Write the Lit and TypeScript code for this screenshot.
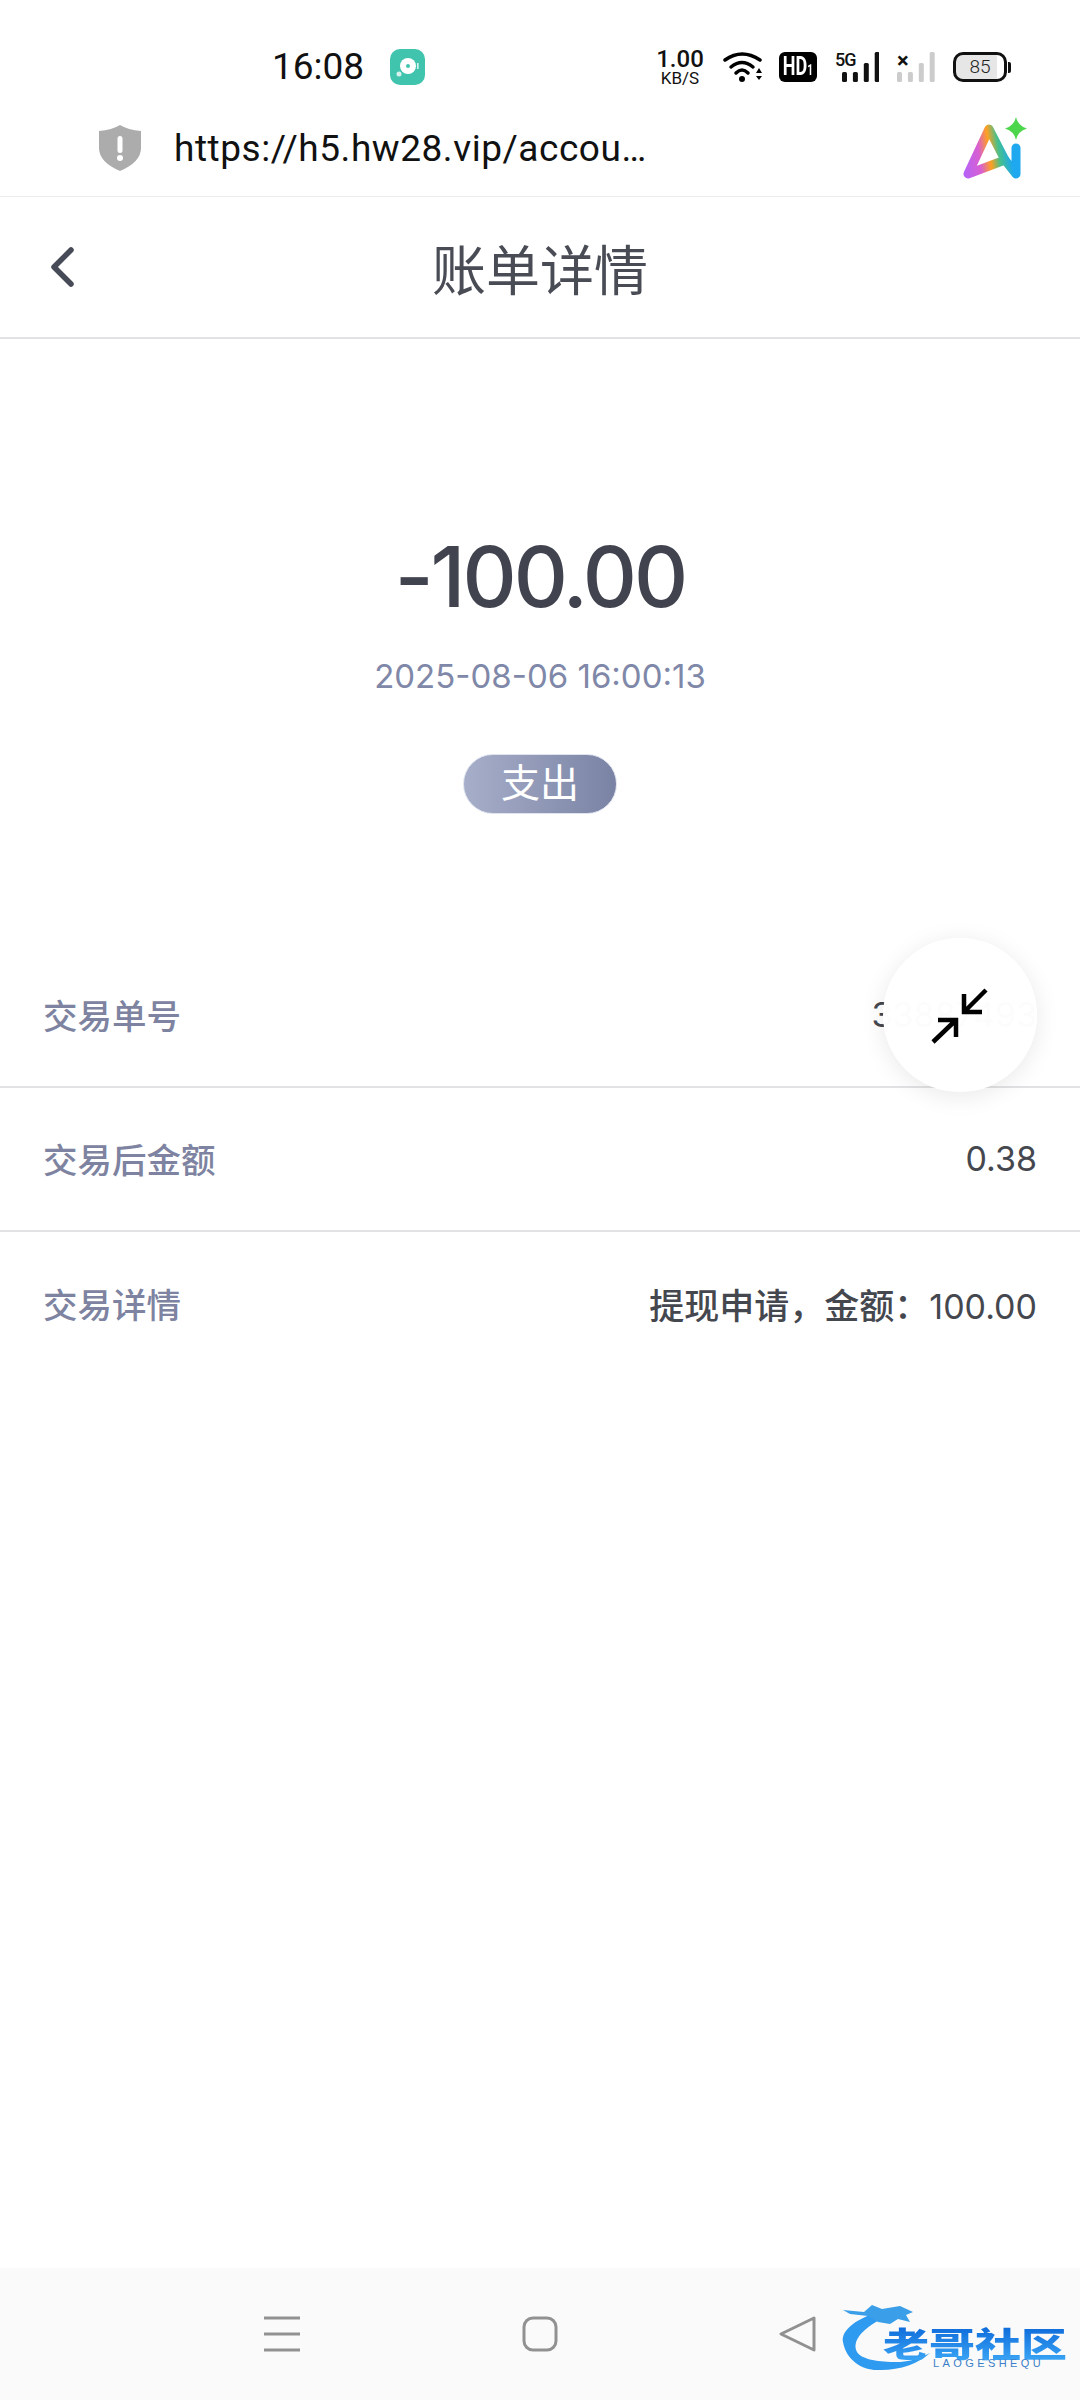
import { LitElement, html, css, svg } from 'lit';
import { customElement } from 'lit/decorators.js';

const rows = [
  { label: '交易单号', note: '', value: '33887493' },
  { label: '交易后金额', note: '', value: '0.38' },
  { label: '交易详情', note: '提现申请，金额：', value: '100.00' },
];

const BAR_HEIGHTS = [10, 10, 19, 30];

const bars = (x0: number, color: string) =>
  BAR_HEIGHTS.map(
    (h, i) =>
      svg`<rect x=${x0 + i * 10.9} y=${30 - h} width="5" height=${h} rx="1.5" fill=${color}></rect>`,
  );

@customElement('app-root')
export class AppRoot extends LitElement {
  static override styles = css`
    :host {
      display: flex;
      flex-direction: column;
      position: relative;
      width: 1080px;
      height: 2400px;
      overflow: hidden;
      background: #fff;
      font-family: Inter, 'Noto Sans CJK SC', sans-serif;
      color: #41444f;
    }
    .status {
      height: 110px;
      flex: none;
      display: flex;
      align-items: center;
      padding: 24px 69px 0 272px;
      box-sizing: border-box;
      font-family: Roboto, sans-serif;
    }
    .time {
      font-size: 37px;
      color: #111;
      line-height: 44px;
    }
    .app-badge {
      display: block;
      margin-left: 26px;
    }
    .status-right {
      margin-left: auto;
      display: flex;
      align-items: center;
    }
    .speed {
      display: flex;
      flex-direction: column;
      align-items: center;
      color: #111;
      width: 46px;
      margin-right: 20px;
    }
    .speed b {
      font-size: 24px;
      line-height: 22px;
      font-weight: 500;
    }
    .speed span {
      font-size: 17px;
      line-height: 16px;
    }
    .hd {
      width: 38px;
      height: 30px;
      border-radius: 6px;
      background: #000;
      color: #fff;
      font-size: 25px;
      font-weight: 700;
      line-height: 30px;
      text-align: center;
      margin: 0 18px 0 16px;
      overflow: hidden;
      white-space: nowrap;
    }
    .hd span {
      display: inline-block;
      transform: scaleX(0.72);
      transform-origin: center;
      margin: 0 -6px;
    }
    .hd small {
      font-size: 14px;
    }
    .sig {
      position: relative;
      width: 44px;
      height: 30px;
      margin-right: 18px;
    }
    .sig.off {
      width: 38px;
    }
    .sig svg {
      display: block;
    }
    .sig-mark {
      position: absolute;
      left: 0;
      top: 0;
      font-size: 18px;
      font-weight: 500;
      color: #111;
      line-height: 16px;
      letter-spacing: -1px;
    }
    .sig.off .sig-mark {
      font-size: 22px;
      font-weight: 700;
      top: 1px;
    }
    .batt {
      width: 54px;
      height: 30px;
      box-sizing: border-box;
      border: 3px solid #111;
      border-radius: 10px;
      font-size: 19px;
      font-weight: 300;
      text-align: center;
      line-height: 24px;
      color: #222;
      background: linear-gradient(90deg, #e6e6e6 86%, #fff 86%);
    }
    .batt-tip {
      width: 3px;
      height: 11px;
      background: #111;
      margin-left: 1px;
      border-radius: 0 2px 2px 0;
    }
    .urlbar {
      height: 87px;
      flex: none;
      display: flex;
      align-items: center;
      box-sizing: border-box;
      border-bottom: 1px solid #ececec;
      padding: 0 0 10px 98px;
      font-family: Roboto, sans-serif;
    }
    .url {
      font-size: 37px;
      margin-left: 32px;
      color: #111;
      letter-spacing: 0.55px;
    }
    .ai {
      margin-left: auto;
      margin-right: 53px;
    }
    .header {
      height: 142px;
      flex: none;
      display: grid;
      grid-template-columns: 1fr auto 1fr;
      align-items: center;
      box-sizing: border-box;
      border-bottom: 2px solid #e2e2e4;
      font-size: 54px;
      color: #4a4c55;
    }
    .back {
      display: block;
      margin-left: 46px;
    }
    .summary {
      display: flex;
      flex-direction: column;
      align-items: center;
      padding-top: 179px;
      height: 605px;
      box-sizing: border-box;
      flex: none;
    }
    .amount {
      font-size: 84px;
      line-height: 118px;
      font-weight: 500;
      color: #41444f;
      letter-spacing: -3px;
    }
    .date {
      font-size: 33px;
      line-height: 44px;
      color: #7f88a8;
      margin-top: 18px;
    }
    .pill {
      margin-top: 56px;
      width: 154px;
      height: 60px;
      box-sizing: border-box;
      border-radius: 30px;
      border: 1px solid #dfe3ef;
      background: linear-gradient(90deg, #a6aec9, #7b83a5);
      color: #fff;
      font-size: 39px;
      line-height: 56px;
      text-align: center;
    }
    .row {
      height: 144px;
      box-sizing: border-box;
      border-bottom: 2px solid #e2e2e4;
      display: flex;
      align-items: center;
      justify-content: space-between;
      padding: 0 43px 2px;
      font-size: 34.5px;
    }
    .row.last {
      border-bottom: none;
    }
    .k {
      color: #7d83a0;
      font-weight: 500;
    }
    .v {
      color: #45474f;
      font-size: 34px;
    }
    .v .cn {
      font-size: 35px;
      font-weight: 500;
    }
    .fab {
      position: absolute;
      left: 883px;
      top: 938px;
      width: 154px;
      height: 154px;
      border-radius: 50%;
      background: rgba(255, 255, 255, 0.985);
      box-shadow: 0 4px 24px rgba(0, 0, 0, 0.09);
      display: flex;
      align-items: center;
      justify-content: center;
    }
    .nav {
      margin-top: auto;
      height: 132px;
      background: #fafafa;
      position: relative;
      display: flex;
      align-items: center;
      flex: none;
      padding-left: 264px;
      box-sizing: border-box;
    }
    .nav svg {
      display: block;
    }
    .home,
    .tri {
      margin-left: 219px;
    }
    .mark {
      position: absolute;
      left: 838px;
      top: 34px;
      width: 240px;
      height: 86px;
    }
    .mark-art {
      position: absolute;
      left: 0;
      top: 0;
    }
    .mark-cn {
      position: absolute;
      left: 45px;
      top: 15px;
      font-size: 46px;
      font-weight: 900;
      line-height: 50px;
      white-space: nowrap;
      font-family: 'Noto Sans CJK SC', sans-serif;
      transform: scale(1, 0.74);
      transform-origin: left center;
      background: linear-gradient(180deg, #0a66d8, #3aa4f4);
      -webkit-background-clip: text;
      background-clip: text;
      color: transparent;
    }
    .mark-en {
      position: absolute;
      left: 95px;
      top: 55px;
      font-size: 11px;
      line-height: 12px;
      letter-spacing: 3.4px;
      color: #3c7fc8;
      font-family: 'Liberation Sans', sans-serif;
    }
  `;

  override render() {
    return html`
      <div class="status">
        <span class="time">16:08</span>
        <svg class="app-badge" width="35" height="36" viewBox="0 0 35 36">
          <rect width="35" height="36" rx="10" fill="#41c4ae"></rect>
          <circle cx="18" cy="17" r="8" fill="#fff"></circle>
          <circle cx="18" cy="17" r="2" fill="#41c4ae"></circle>
          <circle cx="9" cy="25" r="2.5" fill="#d8f3ee"></circle>
          <rect x="27" y="14" width="1.6" height="6" fill="#d8f3ee"></rect>
        </svg>
        <div class="status-right">
          <div class="speed"><b>1.00</b><span>KB/S</span></div>
          <svg width="40" height="30" viewBox="0 0 40 30">
            <path d="M2 8 Q19 -4 37 8" fill="none" stroke="#000" stroke-width="3.5" stroke-linecap="round"></path>
            <path d="M8 15 Q19 6 30 15" fill="none" stroke="#000" stroke-width="3.5" stroke-linecap="round"></path>
            <path d="M13 21 Q19 15 25 21" fill="none" stroke="#000" stroke-width="3.5" stroke-linecap="round"></path>
            <circle cx="19" cy="27" r="3" fill="#000"></circle>
            <path d="M33 21 L36 16 L39 21 Z M33 24 L36 28 L39 24 Z" fill="#000"></path>
          </svg>
          <div class="hd"><span>HD<small>1</small></span></div>
          <div class="sig">
            <svg width="44" height="30" viewBox="0 0 44 30">${bars(7, '#111')}</svg>
            <span class="sig-mark">5G</span>
          </div>
          <div class="sig off">
            <svg width="38" height="30" viewBox="0 0 38 30">${bars(0, '#ccc')}</svg>
            <span class="sig-mark">×</span>
          </div>
          <div class="batt">85</div>
          <div class="batt-tip"></div>
        </div>
      </div>

      <div class="urlbar">
        <svg width="44" height="48" viewBox="0 0 44 48">
          <path d="M22 1 Q30 6 43 7 V24 Q43 38 22 47 Q1 38 1 24 V7 Q14 6 22 1 Z" fill="#acacac"></path>
          <rect x="19.5" y="12" width="5" height="17" rx="2.5" fill="#fff"></rect>
          <circle cx="22" cy="34" r="3" fill="#fff"></circle>
        </svg>
        <span class="url">https://h5.hw28.vip/accou…</span>
        <svg class="ai" width="64" height="62" viewBox="0 0 64 62">
          <defs>
            <linearGradient id="aig" gradientUnits="userSpaceOnUse" x1="0" y1="40" x2="58" y2="32">
              <stop offset="0" stop-color="#b763f5"></stop>
              <stop offset="0.28" stop-color="#d85fd0"></stop>
              <stop offset="0.46" stop-color="#ffa020"></stop>
              <stop offset="0.62" stop-color="#46c08c"></stop>
              <stop offset="0.82" stop-color="#1ea8f0"></stop>
            </linearGradient>
          </defs>
          <path d="M5 57 L26 12 L42 43 Z" fill="none" stroke="url(#aig)" stroke-width="9" stroke-linejoin="round"></path>
          <path d="M42 43 L53 57 V31" fill="none" stroke="url(#aig)" stroke-width="9" stroke-linecap="round" stroke-linejoin="round"></path>
          <path d="M53 0 Q55 9 64 11.5 Q55 14 53 23 Q51 14 42 11.5 Q51 9 53 0 Z" fill="#4cd64c"></path>
        </svg>
      </div>

      <div class="header">
        <svg class="back" width="36" height="44" viewBox="0 0 36 44">
          <path d="M25 5 L8 22 L25 39" fill="none" stroke="#474a57" stroke-width="5.5" stroke-linecap="round" stroke-linejoin="round"></path>
        </svg>
        <span>账单详情</span>
      </div>

      <div class="summary">
        <div class="amount">-100.00</div>
        <div class="date">2025-08-06 16:00:13</div>
        <div class="pill">支出</div>
      </div>

      ${rows.map(
        (r, i) => html`<div class="row ${i === rows.length - 1 ? 'last' : ''}">
          <span class="k">${r.label}</span>
          <span class="v"><span class="cn">${r.note}</span>${r.value}</span>
        </div>`,
      )}

      <div class="fab">
        <svg width="60" height="60" viewBox="0 0 60 60">
          <path d="M3 57 L26 35 M8 35 H26 V52 M56 5 L34 27 M34 9 V27 H52" fill="none" stroke="#000" stroke-width="4.5"></path>
        </svg>
      </div>

      <div class="nav">
        <svg width="38" height="38" viewBox="0 0 38 38">
          <path d="M0 3 H36 M0 19 H36 M0 35 H36" stroke="#919191" stroke-width="3"></path>
        </svg>
        <svg class="home" width="38" height="38" viewBox="0 0 38 38">
          <rect x="3" y="3" width="32" height="32" rx="9" fill="none" stroke="#919191" stroke-width="3"></rect>
        </svg>
        <svg class="tri" width="38" height="38" viewBox="0 0 38 38">
          <path d="M36 3 V35 L3 19 Z" fill="none" stroke="#919191" stroke-width="3" stroke-linejoin="round"></path>
        </svg>
        <div class="mark">
          <svg class="mark-art" width="100" height="80" viewBox="0 0 100 80">
            <path d="M32 13 C14 20 3 30 5 40 C8 58 24 68 39 68 C60 69 80 62 92 51 C78 58 68 60 59 60 C42 60 24 58 19 50 C14 40 22 28 45 16 Z" fill="#2f9bf0"></path>
            <path d="M5 8 L26 10 L34 3 L44 7 L62 4 L75 10 L68 13 L72 20 L60 17 L52 22 L40 20 L30 14 L12 12 Z" fill="#3a9fe8"></path>
          </svg>
          <span class="mark-cn">老哥社区</span>
          <span class="mark-en">LAOGESHEQU</span>
        </div>
      </div>
    `;
  }
}
